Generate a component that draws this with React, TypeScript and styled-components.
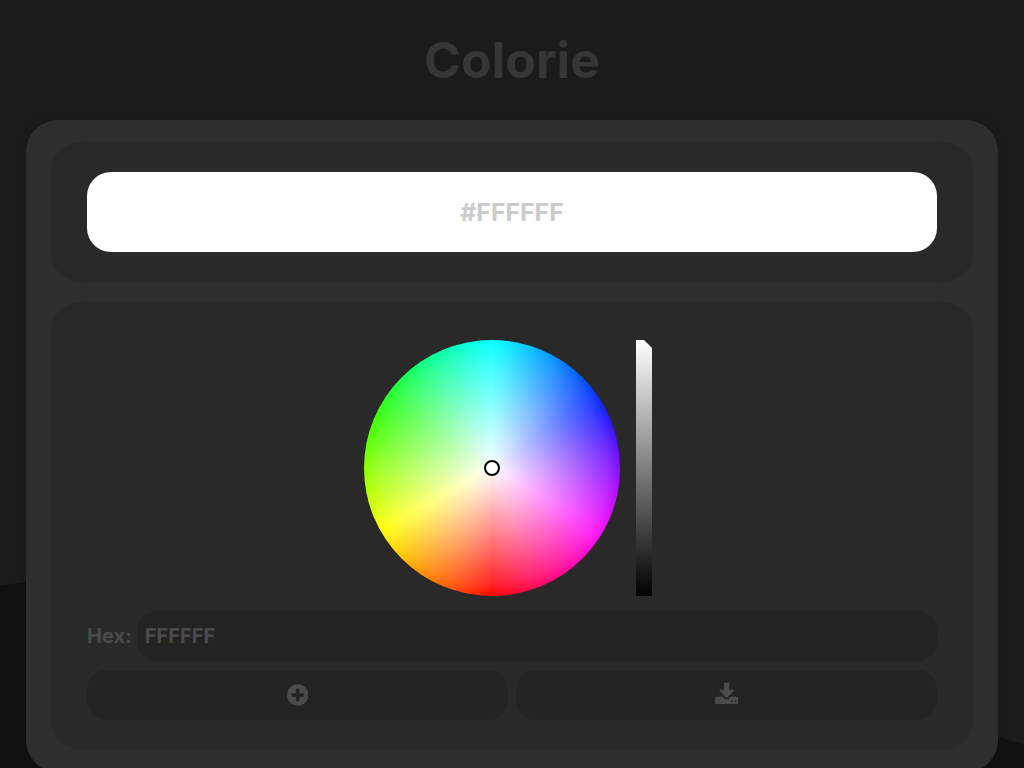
import React from 'react';
import styled, { createGlobalStyle } from 'styled-components';

const GlobalStyle = createGlobalStyle`
  *, *::before, *::after { box-sizing: border-box; }
  html, body { margin: 0; height: 100%; overflow: hidden; }
  body, button, input { font-family: Inter, sans-serif; }
`;

const Page = styled.main`
  position: relative;
  z-index: 0;
  height: 100vh;
  overflow: hidden;
  display: flex;
  flex-direction: column;
  align-items: center;
  background: #1b1b1b;
`;

const Wave = styled.svg`
  position: absolute;
  inset: 0;
  width: 100%;
  height: 100%;
  z-index: -1;
`;

const Title = styled.h1`
  margin: 0;
  height: 120px;
  flex: none;
  line-height: 120px;
  font-size: 50px;
  font-weight: 700;
  color: #363636;
`;

const Card = styled.div`
  width: 972px;
  height: 652px;
  flex: none;
  padding: 22px 24px;
  display: flex;
  flex-direction: column;
  gap: 20px;
  border-radius: 32px;
  background: #2e2e2e;
  box-shadow: 0 0 10px rgba(0, 0, 0, 0.1);
`;

const Panel = styled.section<{ $height: number; $top: number }>`
  height: ${(p) => p.$height}px;
  padding: ${(p) => p.$top}px 37px 0;
  border-radius: 32px;
  background: #292929;
`;

const Swatch = styled.div`
  height: 80px;
  display: flex;
  align-items: center;
  justify-content: center;
  border-radius: 24px;
  background: #fff;
  color: #cbcbcb;
  font-size: 24.8px;
  font-weight: 700;
`;

const Picker = styled.div`
  display: flex;
  justify-content: center;
  gap: 16px;
  padding-right: 8px;
  margin-bottom: 15px;
`;

const Wheel = styled.div`
  width: 256px;
  height: 256px;
  display: flex;
  align-items: center;
  justify-content: center;
  border-radius: 50%;
  background:
    radial-gradient(
      closest-side,
      #fff,
      rgba(255, 255, 255, 0.53) 50%,
      rgba(255, 255, 255, 0.15) 90%,
      rgba(255, 255, 255, 0.02)
    ),
    conic-gradient(
      from 180deg,
      rgb(255, 0, 0) 0deg,
      rgb(255, 213, 0) 50deg, rgb(255, 238, 4) 56deg, rgb(255, 254, 8) 61deg, rgb(238, 255, 4) 66deg, rgb(213, 255, 0) 71deg,
      rgb(80, 255, 0) 105deg, rgb(52, 255, 8) 115deg, rgb(38, 255, 24) 122deg, rgb(24, 255, 58) 131deg, rgb(14, 255, 95) 140deg, rgb(4, 255, 160) 155deg,
      rgb(0, 255, 235) 173deg, rgb(0, 255, 255) 180deg, rgb(0, 235, 255) 187deg,
      rgb(0, 160, 255) 205deg, rgb(0, 85, 255) 224deg, rgb(2, 54, 255) 233deg, rgb(12, 34, 255) 240deg, rgb(40, 18, 255) 248deg, rgb(75, 10, 255) 257deg,
      rgb(213, 8, 255) 290deg, rgb(236, 10, 254) 296deg, rgb(250, 10, 249) 301deg, rgb(255, 8, 232) 306deg, rgb(255, 4, 213) 310deg,
      rgb(255, 0, 0) 360deg
    );
`;

const Marker = styled.div`
  width: 16px;
  height: 16px;
  border: 2px solid #000;
  border-radius: 50%;
  background: #fff;
`;

const Brightness = styled.div`
  width: 16px;
  height: 256px;
  background: linear-gradient(#fff, #000);
  clip-path: polygon(0 0, 8px 0, 16px 8px, 16px 100%, 0 100%);
`;

const HexRow = styled.label`
  display: flex;
  align-items: center;
  gap: 5px;
  margin-bottom: 9px;
  color: #4b4b4b;
  font-size: 20px;
  font-weight: 700;
`;

const HexInput = styled.input`
  flex: 1;
  min-width: 0;
  height: 50px;
  padding: 0 8px;
  border: 0;
  outline: 0;
  border-radius: 20px;
  background: #232323;
  color: #4b4b4b;
  font-size: 20px;
  font-weight: 700;
`;

const Actions = styled.div`
  display: grid;
  grid-template-columns: 1fr 1fr;
  gap: 8px;
`;

const ActionButton = styled.button`
  height: 50px;
  padding: 0 0 1px;
  display: flex;
  align-items: center;
  justify-content: center;
  border: 0;
  border-radius: 20px;
  background: #232323;
  color: #4b4b4b;
`;

const Glyph = styled.svg`
  height: 25px;
  fill: currentColor;
`;

export default function App() {
  return (
    <Page>
      <GlobalStyle />
      <Wave viewBox="0 0 1024 768" preserveAspectRatio="none" aria-hidden="true">
        <path
          fill="#111"
          d="M0 585.5L26 582C200 560 350 590 512 630S850 695 998 736.5L1024 744.5V768H0Z"
        />
      </Wave>
      <Title>Colorie</Title>
      <Card>
        <Panel $height={140} $top={30}>
          <Swatch>#FFFFFF</Swatch>
        </Panel>
        <Panel $height={448} $top={38}>
          <Picker>
            <Wheel>
              <Marker />
            </Wheel>
            <Brightness />
          </Picker>
          <HexRow>
            <span>Hex:</span>
            <HexInput defaultValue="FFFFFF" />
          </HexRow>
          <Actions>
            <ActionButton aria-label="Add color">
              <Glyph viewBox="0 -40 1536 1792">
                <path d="M1216 960v-128q0-26-19-45t-45-19h-256v-256q0-26-19-45t-45-19h-128q-26 0-45 19t-19 45v256h-256q-26 0-45 19t-19 45v128q0 26 19 45t45 19h256v256q0 26 19 45t45 19h128q26 0 45-19t19-45v-256h256q26 0 45-19t19-45zm320-64q0 209-103 385.5t-279.5 279.5-385.5 103-385.5-103-279.5-279.5-103-385.5 103-385.5 279.5-279.5 385.5-103 385.5 103 279.5 279.5 103 385.5z" />
              </Glyph>
            </ActionButton>
            <ActionButton aria-label="Download palette">
              <Glyph viewBox="0 -40 1664 1792">
                <path d="M1280 1344q0-26-19-45t-45-19-45 19-19 45 19 45 45 19 45-19 19-45zm256 0q0-26-19-45t-45-19-45 19-19 45 19 45 45 19 45-19 19-45zm128-224v320q0 40-28 68t-68 28h-1472q-40 0-68-28t-28-68v-320q0-40 28-68t68-28h465l135 136q58 56 136 56t136-56l136-136h464q40 0 68 28t28 68zm-325-569q17 41-14 70l-448 448q-18 19-45 19t-45-19l-448-448q-31-29-14-70 17-39 59-39h256v-448q0-26 19-45t45-19h256q26 0 45 19t19 45v448h256q42 0 59 39z" />
              </Glyph>
            </ActionButton>
          </Actions>
        </Panel>
      </Card>
    </Page>
  );
}
